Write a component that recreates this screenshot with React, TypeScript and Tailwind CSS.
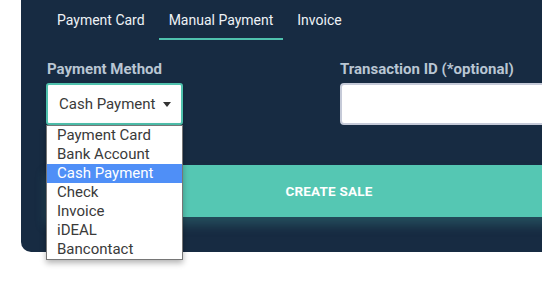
import React from "react";

const options = ["Payment Card", "Bank Account", "Cash Payment", "Check", "Invoice", "iDEAL", "Bancontact"];

export default function App() {
  return (
    <div className="relative w-[542px] h-[296px] overflow-hidden bg-white" style={{ fontFamily: "Roboto, 'Noto Sans', sans-serif" }}>
      <div className="ml-[21px] w-[620px] h-[252px] bg-[#172b42] rounded-bl-[10px] pl-[25px]">
        <div className="flex h-[40px] pl-[1px] gap-[4px]">
          <div className="px-[10px] flex items-center text-[14px] text-[#eef2f6] pt-[3px] border-b-2 border-transparent">Payment Card</div>
          <div className="px-[10px] flex items-center text-[14px] text-[#eef2f6] pt-[3px] border-b-2 border-[#4fc1ad]">Manual Payment</div>
          <div className="px-[10px] flex items-center text-[14px] text-[#eef2f6] pt-[3px] border-b-2 border-transparent">Invoice</div>
        </div>
        <div className="grid grid-cols-[270px_272px] gap-x-[24px] w-[566px] mt-[20px]">
          <div className="flex flex-col">
            <label className="text-[15px] font-bold text-[#b9c6d3] leading-[18px] pl-[1px]">Payment Method</label>
            <div className="mt-[5px] w-[137px] h-[42px] bg-white rounded-[3px] border-2 border-[#4fc1ad] flex items-center justify-between pl-[11px] pr-[10px] shadow-[0_2px_4px_rgba(0,0,0,0.15)]">
              <span className="text-[15px] text-[#3a3a3a]">Cash Payment</span>
              <svg width="8" height="5" viewBox="0 0 8 5"><path d="M0 0h8L4 5z" fill="#333" /></svg>
            </div>
          </div>
          <div className="flex flex-col">
            <label className="text-[15px] font-bold text-[#b9c6d3] leading-[18px]">Transaction ID (*optional)</label>
            <div className="mt-[5px] h-[42px] bg-white rounded-[4px] border-2 border-[#c5cad8]" />
          </div>
        </div>
        <button className="mt-[40px] w-[566px] h-[52px] bg-[#55c7b3] text-white font-bold text-[13.5px] tracking-[0.2px] shadow-[0_8px_10px_rgba(60,140,140,0.35)]">
          CREATE SALE
        </button>
      </div>
      <div className="absolute left-[46px] top-[125px] w-[137px] bg-white border border-[#767676] shadow-[0_3px_6px_rgba(0,0,0,0.3)]">
        {options.map((o) => (
          <div
            key={o}
            className={
              o === "Cash Payment"
                ? "h-[19px] leading-[19px] pl-[10px] text-[15px] bg-[#4f8ff7] text-white"
                : "h-[19px] leading-[19px] pl-[10px] text-[15px] text-[#3a3a3a]"
            }
          >
            {o}
          </div>
        ))}
      </div>
    </div>
  );
}
